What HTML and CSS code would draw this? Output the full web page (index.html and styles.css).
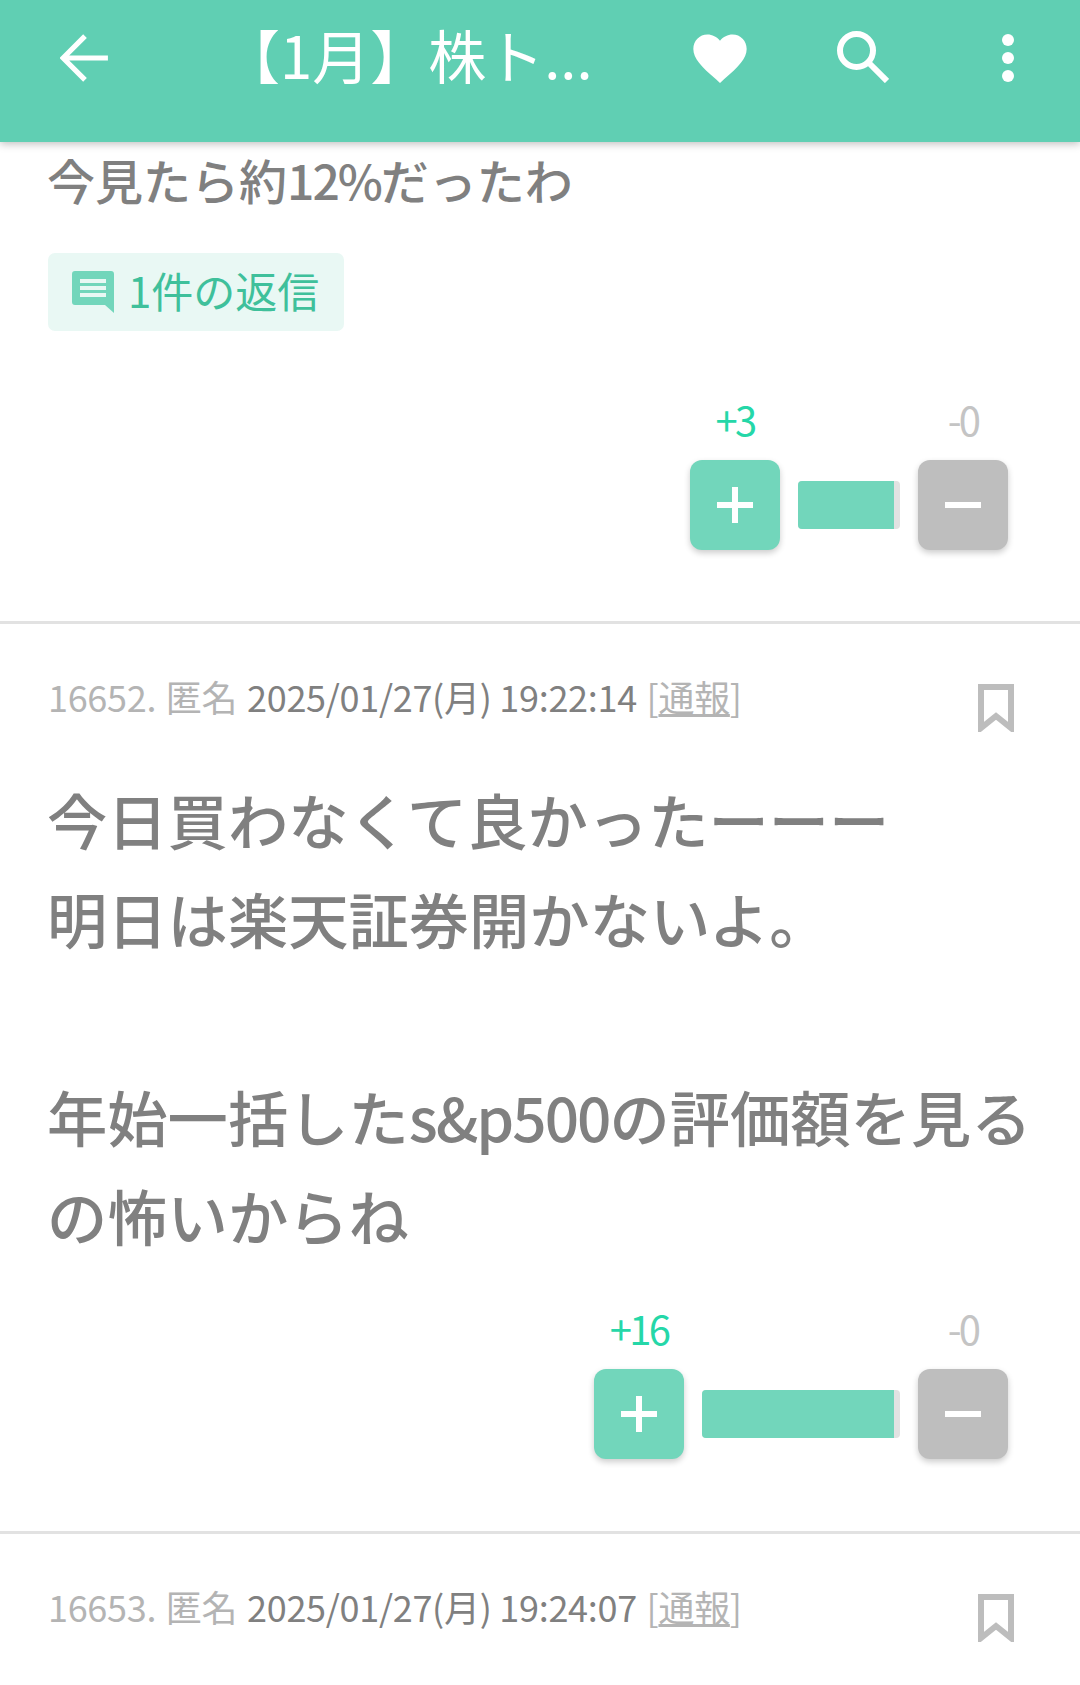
FILE: index.html
```html
<!DOCTYPE html>
<html lang="ja">

<head>
    <meta charset="UTF-8" />
    <meta name="viewport" content="width=device-width, initial-scale=1.0" />
    <title>【1月】株ト...</title>
    <link rel="stylesheet" href="styles.css">
</head>

<body>
    <header class="header">
        <svg class="icon-back" viewBox="0 0 48 48">
            <path d="M46 24H5M24 3L3 24l21 21" />
        </svg>
        <h1 class="title">【1月】株ト...</h1>
        <svg class="icon-heart" viewBox="0 0 24 24">
            <path d="M12 21.4l-1.5-1.4C5.1 15.2 2 12.3 2 8.6 2 5.6 4.3 3.2 7.3 3.2c1.8 0 3.5.9 4.7 2.3 1.2-1.4 2.9-2.3 4.7-2.3 3 0 5.3 2.4 5.3 5.4 0 3.7-3.1 6.6-8.5 11.4z" />
        </svg>
        <svg class="icon-search" viewBox="0 0 52 52">
            <circle cx="19.5" cy="19.5" r="16.5" />
            <path d="M32 32l18 18" />
        </svg>
        <div class="icon-menu">
            <span></span>
            <span></span>
            <span></span>
        </div>
    </header>

    <main>
        <section class="post post-first">
            <p class="post-text post-text-small">今見たら約<span class="latin">12%</span>だったわ</p>
            <a class="reply-btn">
                <svg class="icon-reply" viewBox="0 0 42 42">
                    <path class="reply-bubble" d="M3 0h36a3 3 0 0 1 3 3v39l-9-8H3a3 3 0 0 1-3-3V3a3 3 0 0 1 3-3z" />
                    <path class="reply-lines" d="M8 8h26v4H8zM8 15h26v4H8zM8 22h26v4H8z" />
                </svg>
                <span class="reply-label">1件の返信</span>
            </a>
            <div class="votes votes-first">
                <div class="vote">
                    <span class="vote-count plus">+3</span>
                    <button class="vote-btn btn-plus"><span class="sign-h"></span><span class="sign-v"></span></button>
                </div>
                <div class="bar" style="width: 102px"><div class="bar-fill"></div></div>
                <div class="vote">
                    <span class="vote-count minus">-0</span>
                    <button class="vote-btn btn-minus"><span class="sign-h"></span></button>
                </div>
            </div>
        </section>

        <section class="post post-second">
            <div class="post-meta">
                <p class="meta-text">16652. 匿名 <span class="meta-date">2025/01/27(月) 19:22:14</span> [<u>通報</u>]</p>
                <svg class="icon-bookmark" viewBox="0 0 36 48">
                    <path d="M3 3h30v41L18 32 3 44z" />
                </svg>
            </div>
            <p class="post-text">今日買わなくて良かったーーー<br>明日は楽天証券開かないよ。<br><br>年始一括した<span class="latin">s&amp;p500</span>の評価額を見る<br>の怖いからね</p>
            <div class="votes">
                <div class="vote">
                    <span class="vote-count plus">+16</span>
                    <button class="vote-btn btn-plus"><span class="sign-h"></span><span class="sign-v"></span></button>
                </div>
                <div class="bar" style="width: 198px"><div class="bar-fill"></div></div>
                <div class="vote">
                    <span class="vote-count minus">-0</span>
                    <button class="vote-btn btn-minus"><span class="sign-h"></span></button>
                </div>
            </div>
        </section>

        <section class="post post-last">
            <div class="post-meta">
                <p class="meta-text">16653. 匿名 <span class="meta-date">2025/01/27(月) 19:24:07</span> [<u>通報</u>]</p>
                <svg class="icon-bookmark" viewBox="0 0 36 48">
                    <path d="M3 3h30v41L18 32 3 44z" />
                </svg>
            </div>
        </section>
    </main>
</body>

</html>
```

FILE: styles.css
```css
* {
    margin: 0px;
    padding: 0px;
    box-sizing: border-box;
}

html,
body {
    height: 1685px;
    overflow: hidden;
}

body {
    background: #fff;
    font-family: "Noto Sans CJK JP", "Noto Sans", sans-serif;
    color: #808080;
}

.header {
    position: relative;
    z-index: 2;
    height: 142px;
    background: #60cfb3;
    box-shadow: 0 2px 8px rgba(0, 0, 0, 0.25);
    display: flex;
    align-items: flex-start;
    padding: 0 0 0 60px;
}

.icon-back {
    width: 50px;
    height: 50px;
    margin-top: 33px;
    fill: none;
    stroke: #fff;
    stroke-width: 5;
}

.title {
    width: 403px;
    margin-left: 112px;
    font-size: 58px;
    font-weight: 400;
    line-height: 108px;
    color: #fff;
    white-space: nowrap;
}

.icon-heart {
    width: 64px;
    height: 64px;
    margin: 26px 0 0 63px;
    fill: #fff;
}

.icon-search {
    width: 52px;
    height: 52px;
    margin: 31px 0 0 85px;
    fill: none;
    stroke: #fff;
    stroke-width: 6;
}

.icon-menu {
    margin: 34px 0 0 113px;
    display: flex;
    flex-direction: column;
    gap: 6px;
}

.icon-menu span {
    display: block;
    width: 12px;
    height: 12px;
    border-radius: 50%;
    background: #fff;
}

.post {
    border-bottom: 3px solid #e2e2e2;
    padding: 0 0 71px 48px;
}

.post-first {
    padding-top: 7px;
}

.post-second {
    padding-bottom: 72px;
}

.post-last {
    border-bottom: none;
}

.post-text {
    font-size: 60.3px;
    font-weight: 500;
    line-height: 99px;
    margin: 37px 0 0 -1px;
}

.post-text .latin {
    letter-spacing: -2px;
}

.post-text-small {
    font-size: 48px;
    line-height: 60px;
    margin-top: 0;
}

.reply-btn {
    display: flex;
    align-items: center;
    width: 296px;
    height: 78px;
    margin-top: 44px;
    padding-left: 24px;
    background: #e9f8f4;
    border-radius: 7px;
    color: #3fc09b;
    font-size: 42px;
    gap: 14px;
}

.reply-label {
    margin-bottom: 6px;
}

.icon-reply {
    width: 42px;
    height: 42px;
}

.reply-bubble {
    fill: #72d6bb;
}

.reply-lines {
    fill: #e9f8f4;
}

.votes {
    display: flex;
    justify-content: flex-end;
    align-items: flex-end;
    padding-right: 72px;
    margin-top: 40px;
}

.votes-first {
    margin-top: 64px;
}

.vote {
    width: 90px;
    display: flex;
    flex-direction: column;
    align-items: center;
}

.vote-count {
    font-size: 40px;
    letter-spacing: -2.7px;
    line-height: 48px;
    margin-bottom: 17px;
}

.plus {
    color: #25d7a8;
}

.minus {
    color: #c4c4c4;
}

.vote-btn {
    position: relative;
    width: 90px;
    height: 90px;
    border: none;
    border-radius: 12px;
    box-shadow: 0 3px 6px rgba(0, 0, 0, 0.2);
}

.btn-plus {
    background: #72d6bb;
}

.btn-minus {
    background: #bebebe;
}

.sign-h {
    position: absolute;
    left: 27px;
    top: 42px;
    width: 36px;
    height: 6px;
    background: #fff;
}

.sign-v {
    position: absolute;
    left: 42px;
    top: 27px;
    width: 6px;
    height: 36px;
    background: #fff;
}

.bar {
    height: 48px;
    margin: 0 18px 21px;
    background: #e2e2e2;
    border-radius: 4px;
    overflow: hidden;
    padding-right: 6px;
}

.bar-fill {
    height: 100%;
    background: #72d6bb;
}

.post-meta {
    display: flex;
    justify-content: space-between;
    padding: 44px 66px 0 0;
}

.meta-text {
    font-size: 36px;
    letter-spacing: -0.3px;
    word-spacing: 2px;
    line-height: 56px;
    color: #b4b4b4;
}

.meta-date {
    color: #808080;
    word-spacing: 0;
}

.icon-bookmark {
    width: 36px;
    height: 48px;
    margin-top: 16px;
    fill: none;
    stroke: #bdbdbd;
    stroke-width: 6;
}
```
